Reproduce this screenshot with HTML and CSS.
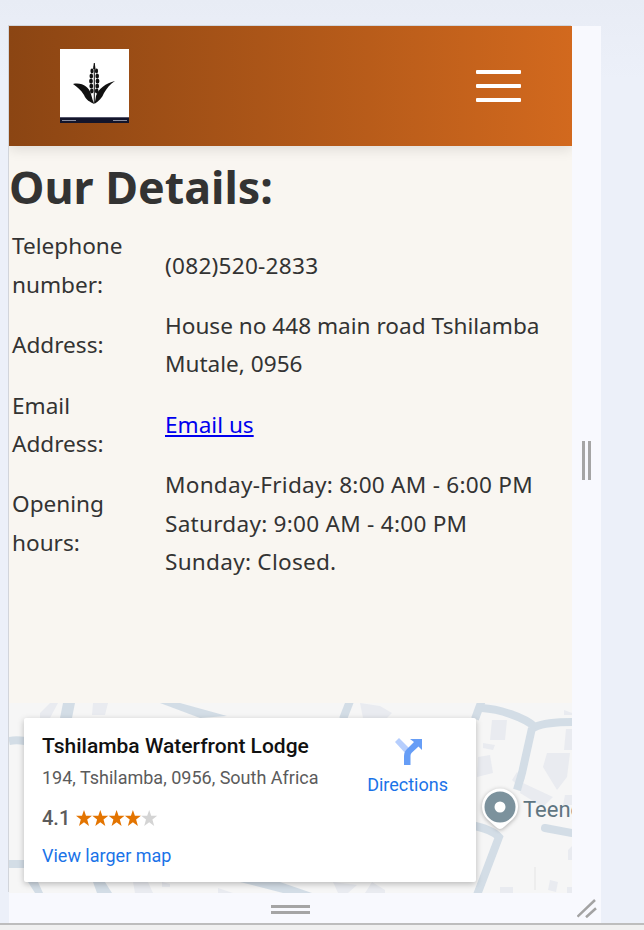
FILE: index.html
```html
<!DOCTYPE html>
<html lang="en">
<head>
  <meta charset="UTF-8">
  <title>Our Details</title>
  <link rel="stylesheet" href="styles.css">
</head>
<body>
  <div class="frame">
    <div class="pane">
      <main class="viewport">
        <header class="topbar">
          <div class="logo">
            <svg class="logo-mark" viewBox="0 0 69 68" width="69" height="68">
              <g fill="#111">
                <path d="M33.800 14 L34.800 14 L35.500 20 L33.100 20 Z"/>
                <ellipse cx="32" cy="22" rx="1.600" ry="2.400"/>
                <ellipse cx="36.500" cy="22" rx="1.600" ry="2.400"/>
                <ellipse cx="31.300" cy="27" rx="1.800" ry="2.500"/>
                <ellipse cx="37.200" cy="27" rx="1.800" ry="2.500"/>
                <ellipse cx="31" cy="32" rx="1.900" ry="2.600"/>
                <ellipse cx="37.500" cy="32" rx="1.900" ry="2.600"/>
                <ellipse cx="31.300" cy="37" rx="1.900" ry="2.600"/>
                <ellipse cx="37.200" cy="37" rx="1.900" ry="2.600"/>
                <ellipse cx="31.800" cy="42" rx="1.800" ry="2.400"/>
                <ellipse cx="36.700" cy="42" rx="1.800" ry="2.400"/>
                <path d="M33.800 17 H34.800 V54 H33.800 Z"/>
                <path d="M13 35 C22 33 29 38 31 45 C32 49 33 52 34.300 55 C30 53 26 51 24 46 C21 41 17 38 13 35 Z"/>
                <path d="M55 32 C46 34 38 40 36 47 C35.500 50 35 53 34.300 55 C39 52 42 49 44 44 C47 39 50 35 55 32 Z"/>
              </g>
            </svg>
            <div class="logo-strip"><span></span><span></span></div>
          </div>
          <div class="burger"><span></span><span></span><span></span></div>
        </header>

        <h1 class="title">Our Details:</h1>

        <table class="details">
          <tr>
            <td>Telephone number:</td>
            <td class="digits">(082)520-2833</td>
          </tr>
          <tr>
            <td>Address:</td>
            <td>House no 448 main road Tshilamba Mutale, 0956</td>
          </tr>
          <tr>
            <td>Email Address:</td>
            <td><a href="#">Email us</a></td>
          </tr>
          <tr>
            <td>Opening hours:</td>
            <td class="digits">Monday-Friday: 8:00 AM - 6:00 PM<br>Saturday: 9:00 AM - 4:00 PM<br>Sunday: Closed.</td>
          </tr>
        </table>

        <section class="map">
          <svg class="map-art" viewBox="0 0 563 190" width="563" height="190">
            <g fill="#e9ebf0">
              <path d="M31 10 L41 0 H49 L41 15 H31 Z"/>
              <path d="M84 0 H99 L96 12 H83 Z"/>
              <path d="M351 0 L371 3 L383 10 L378 15 H354 Z"/>
              <path d="M483 17 L498 17 L496 37 L481 37 Z"/>
              <path d="M474 40 L486 42 L484 47 L474 45 Z"/>
              <path d="M469 54 L481 52 L484 70 L468 74 Z"/>
              <path d="M538 50 L561 50 L558 74 L548 87 L534 64 Z"/>
              <path d="M514 80 L544 94 L534 104 L511 90 Z"/>
              <path d="M556 92 H563 V102 H554 Z"/>
              <path d="M555 7 L563 10 V12 H555 Z"/>
              <path d="M557 26 H563 V47 H555 Z"/>
              <path d="M559 147 L563 143 V157 H559 Z"/>
              <path d="M541 177 L549 179 L547 189 L539 187 Z"/>
              <path d="M491 184 H504 V190 H491 Z"/>
              <path d="M558 184 H563 V190 H558 Z"/>
              <path d="M124 179 H139 L144 190 H126 Z"/>
              <path d="M153 179 L161 181 V184 H153 Z"/>
              <path d="M209 185 L224 190 H209 Z"/>
              <path d="M324 179 L348 182 L339 190 H329 Z"/>
              <path d="M356 190 L363 179 L376 187 V190 Z"/>
              <path d="M503 77 L508 69 L516 75 L511 85 Z"/>
            </g>
            <g fill="#d3dde6">
              <path d="M54 0 H66 L63 15 H51 Z"/>
              <path d="M151 0 H171 L218 13 L191 15 Z"/>
              <path d="M19 179 H29 L34 190 H26 Z"/>
              <path d="M84 179 H96 L103 190 H88 Z"/>
              <path d="M231 179 H271 L303 190 H274 Z"/>
            </g>
            <g fill="none" stroke="#d3dde6" stroke-width="8">
              <path d="M473 -3 L466 16"/>
              <path d="M473 5 C490 6 515 14 526 24 C535 20 550 19 563 19"/>
              <path d="M523 25 L513 70 L508 87"/>
              <path d="M462 122 C475 125 485 128 490 134 L468 192"/>
              <path d="M341 -2 L334 16"/>
              <path d="M0 38 C5 37 10 37 16 38"/>
              <path d="M0 161 H16"/>
              <path d="M536 125 L563 130" stroke-linecap="round"/>
            </g>
            <path d="M526 164 V187" stroke="#e4e4e4" stroke-width="1"/>
            <g class="map-pin">
              <path d="M491 126 Q489 126 487 124 L478 116 A18 18 0 1 1 504 116 L495 124 Q493 126 491 126 Z" fill="#fff"/>
              <circle cx="491" cy="104" r="15.500" fill="#7c929d"/>
              <circle cx="491" cy="104" r="5.500" fill="#fff"/>
            </g>
            <text class="map-label" x="514" y="114">Teene</text>
          </svg>

          <div class="place-card">
            <div class="place-info">
              <div class="place-name">Tshilamba Waterfront Lodge</div>
              <div class="place-addr">194, Tshilamba, 0956, South Africa</div>
              <div class="place-rating">
                <span class="score">4.1</span>
                <svg class="stars" viewBox="0 0 82 16" width="82" height="16">
                  <g fill="#e37400">
                    <path d="M8 0 L10 5.800 H16 L11.200 9.600 L13 16 L8 12.200 L3 16 L4.800 9.600 L0 5.800 H6 Z"/>
                    <path d="M24.300 0 L26.300 5.800 H32.300 L27.500 9.600 L29.300 16 L24.300 12.200 L19.300 16 L21.100 9.600 L16.300 5.800 H22.300 Z"/>
                    <path d="M40.600 0 L42.600 5.800 H48.600 L43.800 9.600 L45.600 16 L40.600 12.200 L35.600 16 L37.400 9.600 L32.600 5.800 H38.600 Z"/>
                    <path d="M56.900 0 L58.900 5.800 H64.900 L60.100 9.600 L61.900 16 L56.900 12.200 L51.900 16 L53.700 9.600 L48.900 5.800 H54.900 Z"/>
                  </g>
                  <path d="M73.200 0 L75.200 5.800 H81.200 L76.400 9.600 L78.200 16 L73.200 12.200 L68.200 16 L70 9.600 L65.200 5.800 H71.200 Z" fill="#d4d4d4"/>
                </svg>
              </div>
              <a class="larger" href="#">View larger map</a>
            </div>
            <a class="directions" href="#">
              <svg viewBox="0 0 28 28" width="28" height="28">
                <path d="M1 5 L5 1 L16 12 L12 17 Z" fill="#b6cefd"/>
                <path d="M10 28 V19 C10 15 12 13 14 11 L20 5 L16 2 H28 V13 L24.500 9.500 L18 15.500 C17 16.500 16.500 17.500 16.500 19 V28 Z" fill="#669df6"/>
              </svg>
              <span>Directions</span>
            </a>
          </div>
        </section>
      </main>
      <div class="footbar">
        <span class="grip-h"></span>
      </div>
    </div>
    <aside class="sidebar">
      <span class="grip-v"></span>
      <svg class="corner" viewBox="0 0 20 20" width="20" height="20">
        <path d="M0.500 18.700 L18 2 M9 19.300 L19 10.300" stroke="#a3a3a3" stroke-width="2.500" fill="none"/>
      </svg>
    </aside>
  </div>
  <div class="baseline"></div>
</body>
</html>
```

FILE: styles.css
```css
* {
  box-sizing: border-box;
}

html, body {
  height: 100%;
}

body {
  margin: 0;
  padding-top: 26px;
  padding-left: 9px;
  height: 930px;
  overflow: hidden;
  background: linear-gradient(#e8ecf5, #ecf0f9 80px);
  display: flex;
  flex-direction: column;
  font-family: "Noto Sans", sans-serif;
  color: #333;
}

.frame {
  display: flex;
  width: 592px;
  height: 897px;
}

.pane {
  width: 563px;
  display: flex;
  flex-direction: column;
}

.viewport {
  height: 867px;
  background: #f9f6f1;
  box-shadow: -1px -1px 0 #d2d5db;
  display: flex;
  flex-direction: column;
  overflow: hidden;
  position: relative;
}

.topbar {
  height: 120px;
  flex: none;
  background: linear-gradient(to right, #8b4513, #d2691e);
  box-shadow: 0 4px 12px rgba(0, 0, 0, .1);
  display: flex;
  align-items: center;
  justify-content: space-between;
  padding: 0 51px;
}

.logo {
  width: 69px;
  height: 74px;
  background: #fff;
  display: flex;
  flex-direction: column;
  justify-content: flex-end;
  margin-top: -1px;
}

.logo-mark {
  display: block;
  flex: none;
}

.logo-strip {
  height: 6px;
  flex: none;
  background: #14152b;
  border-top: 1px solid #55566b;
  display: flex;
  justify-content: space-between;
  align-items: center;
  padding: 0 2px;
}

.logo-strip span {
  width: 14px;
  height: 1px;
  background: #8b8c9c;
}

.burger {
  display: flex;
  flex-direction: column;
  gap: 10px;
}

.burger span {
  display: block;
  width: 45px;
  height: 4px;
  background: #fff;
  border-radius: 1px;
}

.title {
  margin: 12px 0 0;
  font-size: 44.800px;
  line-height: 58px;
  font-weight: 700;
  flex: none;
}

.details {
  border-spacing: 2px;
  font-size: 22.600px;
  line-height: 38.400px;
  flex: none;
  margin-top: 9px;
}

.details td {
  padding: .4px 1px;
  vertical-align: middle;
}

.details td:first-child {
  width: 151px;
}

.details .digits {
  letter-spacing: .25px;
}

.details a {
  color: #0000ee;
}

.map {
  position: absolute;
  left: 0;
  right: 0;
  bottom: 0;
  height: 190px;
  background: #f6f6f6;
  overflow: hidden;
  font-family: Roboto, sans-serif;
}

.map-art {
  display: block;
}

.map-pin {
  filter: drop-shadow(0 1px 2px rgba(0, 0, 0, .3));
}

.map-label {
  font-family: Roboto, sans-serif;
  font-size: 22px;
  fill: #5f7581;
}

.place-card {
  position: absolute;
  left: 15px;
  top: 15px;
  width: 452px;
  height: 164px;
  background: #fff;
  border-radius: 2px;
  box-shadow: 0 2px 6px rgba(0, 0, 0, .25);
  display: flex;
  justify-content: space-between;
  padding: 15px 28px 0 18px;
}

.place-name {
  font-size: 21px;
  line-height: 26px;
  font-weight: 500;
  color: #111;
}

.place-addr {
  font-size: 18px;
  line-height: 20px;
  margin-top: 9px;
  color: #5b5b5b;
}

.place-rating {
  margin-top: 18px;
  display: flex;
  align-items: center;
  gap: 6px;
  height: 24px;
}

.score {
  font-size: 20px;
  font-weight: 500;
  color: #5b5b5b;
}

.stars {
  display: block;
}

.larger {
  display: block;
  margin-top: 15px;
  font-size: 18px;
  line-height: 22px;
  color: #1a73e8;
  text-decoration: none;
}

.directions {
  display: flex;
  flex-direction: column;
  align-items: center;
  gap: 9px;
  padding-top: 4px;
  color: #1a73e8;
  text-decoration: none;
  font-size: 18px;
  line-height: 22px;
}

.footbar {
  height: 30px;
  background: #f8f9fe;
  display: flex;
  justify-content: center;
  padding-top: 12px;
}

.grip-h {
  width: 39px;
  height: 9px;
  border-top: 3px solid #a5a5a5;
  border-bottom: 3px solid #a5a5a5;
}

.sidebar {
  width: 29px;
  background: #f8f9fe;
  position: relative;
  display: flex;
  align-items: center;
  justify-content: center;
}

.grip-v {
  width: 9px;
  height: 39px;
  border-left: 3px solid #a5a5a5;
  border-right: 3px solid #a5a5a5;
  position: relative;
  top: -14px;
}

.corner {
  position: absolute;
  right: 4px;
  bottom: 5px;
}

.baseline {
  margin-left: -9px;
  flex: none;
  height: 7px;
  border-top: 2px solid #bdbdbd;
  background: #f0f0f0;
}
```
